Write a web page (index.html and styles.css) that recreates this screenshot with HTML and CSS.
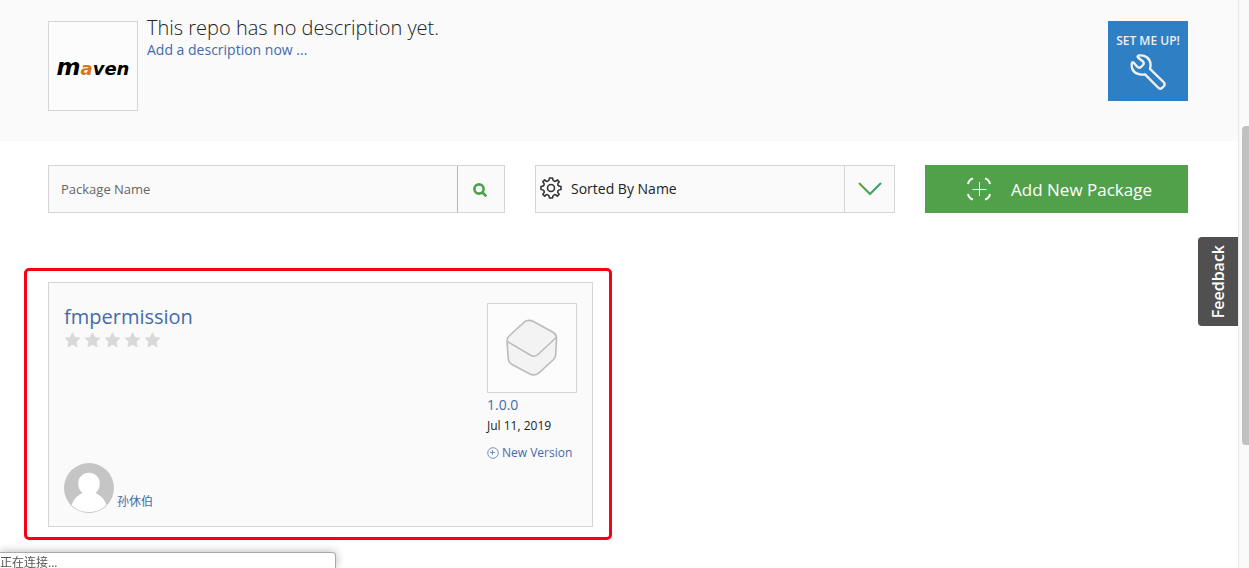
FILE: index.html
```html
<!DOCTYPE html>
<html lang="en">
<head>
<meta charset="utf-8">
<title>Maven repository</title>
<link rel="stylesheet" href="styles.css">
</head>
<body>
<div class="page">
  <main class="main">
    <header class="repo">
      <div class="repo-logo"><span class="maven"><span class="maven-m">m</span><span class="maven-a">a</span>ven</span></div>
      <div class="repo-text">
        <h1 class="repo-desc">This repo has no description yet.</h1>
        <a class="repo-add" href="#">Add a description now ...</a>
      </div>
      <button class="setup" type="button">
        <span>SET ME UP!</span>
        <svg class="setup-icon" viewBox="0 0 36 36" aria-hidden="true"><path d="M2 9 Q2.500 7.500 4 9 L7 12.500 Q9 14.500 11 13 L13 11 Q14.500 9.300 13 7.500 L8.500 4 Q6.500 2 9 1.500 C15 .5 20 4.500 20.500 10 Q20.700 12.500 20 14.800 L33.500 28 Q35.500 30 34 32 L32 34 Q30 35.500 28 33.500 L15 20.300 C9.500 21.500 4 19.500 2.200 14.500 C1.500 12 1.500 11 2 9 Z"/></svg>
      </button>
    </header>
    <section class="content">
      <form class="toolbar">
        <div class="search">
          <input class="search-input" type="text" placeholder="Package Name" aria-label="Package Name">
          <button class="search-button" type="button" aria-label="Search">
            <svg class="search-icon" viewBox="0 0 14 14" aria-hidden="true"><circle cx="6" cy="6" r="4.600"/><path d="M9.500 9.500 L13.300 13.300"/></svg>
          </button>
        </div>
        <div class="sort">
          <select class="sort-select" aria-label="Sort order"><option>Sorted By Name</option></select>
          <svg class="gear" viewBox="0 0 22 22" aria-hidden="true"><circle cx="11" cy="11" r="3.500"/><path d="M9.500 1 H12.500 Q12.800 4 14.500 4.300 Q16 4.600 17.300 2.900 L19.200 4.800 Q17.200 6.500 17.800 7.900 Q18.400 9.400 21 9.500 V12.500 Q18.400 12.700 17.800 14.100 Q17.200 15.500 19.200 17.300 L17.300 19.200 Q16 17.400 14.500 17.700 Q12.800 18 12.500 21 H9.500 Q9.200 18 7.500 17.700 Q6 17.400 4.700 19.200 L2.800 17.300 Q4.800 15.500 4.200 14.100 Q3.600 12.700 1 12.500 V9.500 Q3.600 9.400 4.200 7.900 Q4.800 6.500 2.800 4.800 L4.700 2.900 Q6 4.600 7.500 4.300 Q9.200 4 9.500 1 Z"/></svg>
          <span class="sort-arrow">
            <svg class="chevron" viewBox="0 0 24 14" aria-hidden="true"><defs><linearGradient id="cg"><stop offset="0" stop-color="#679f35"/><stop offset="1" stop-color="#27a27b"/></linearGradient></defs><path d="M1 1 L12 12 L23 1" stroke="url(#cg)"/></svg>
          </span>
        </div>
        <button class="add" type="button">
          <svg class="add-icon" viewBox="0 0 24 24" aria-hidden="true"><path class="add-corners" d="M6 1.500 Q2 2.500 1 7 M18 1.500 Q22 2.500 23 7 M1 17 Q2 21.500 6 22.500 M23 17 Q22 21.500 18 22.500"/><path d="M12.500 5 V19 M5.500 12.500 H19.500"/></svg>
          <span>Add New Package</span>
        </button>
      </form>
      <div class="packages">
        <article class="card">
          <div class="card-left">
            <a class="card-name" href="#">fmpermission</a>
            <div class="stars" role="img" aria-label="No rating">
              <svg viewBox="0 0 16 16"><path d="M8 .5 L10.300 5.300 L15.600 6 L11.800 9.700 L12.700 15 L8 12.500 L3.300 15 L4.200 9.700 L.4 6 L5.700 5.300 Z"/></svg>
              <svg viewBox="0 0 16 16"><path d="M8 .5 L10.300 5.300 L15.600 6 L11.800 9.700 L12.700 15 L8 12.500 L3.300 15 L4.200 9.700 L.4 6 L5.700 5.300 Z"/></svg>
              <svg viewBox="0 0 16 16"><path d="M8 .5 L10.300 5.300 L15.600 6 L11.800 9.700 L12.700 15 L8 12.500 L3.300 15 L4.200 9.700 L.4 6 L5.700 5.300 Z"/></svg>
              <svg viewBox="0 0 16 16"><path d="M8 .5 L10.300 5.300 L15.600 6 L11.800 9.700 L12.700 15 L8 12.500 L3.300 15 L4.200 9.700 L.4 6 L5.700 5.300 Z"/></svg>
              <svg viewBox="0 0 16 16"><path d="M8 .5 L10.300 5.300 L15.600 6 L11.800 9.700 L12.700 15 L8 12.500 L3.300 15 L4.200 9.700 L.4 6 L5.700 5.300 Z"/></svg>
            </div>
            <div class="owner">
              <svg class="avatar" viewBox="0 0 50 50" aria-hidden="true"><defs><clipPath id="av"><circle cx="25" cy="25" r="24.500"/></clipPath></defs><circle cx="25" cy="25" r="25" fill="#c5c5c5"/><g clip-path="url(#av)" fill="#fff"><path d="M14.200 20.500 A10.800 10.800 0 1 1 35.800 20.500 Q35.500 27 31.500 30 Q39 33 42.500 42 Q36 49 25 49 Q14 49 7.500 42 Q11 33 18.500 30 Q14.500 27 14.200 20.500 Z"/></g></svg>
              <a class="owner-name" href="#">孙休伯</a>
            </div>
          </div>
          <div class="card-right">
            <div class="thumb">
              <svg class="box-icon" viewBox="0 0 52 58" aria-hidden="true"><path d="M18.500 2.800 Q22.500 .2 27 2.300 L47.500 13.500 Q51 16 50.500 20 L49.700 36 Q49.500 38.500 47.500 40.500 L33 53.800 Q29 57.300 24 55 L6 45.500 Q2.500 43.500 2.300 40 L1 22 Q1 19 3.500 16.500 Z"/><path d="M1.300 22.500 L25 36.500 Q29 38.500 32.500 35 L50.200 18.500"/></svg>
            </div>
            <a class="version" href="#">1.0.0</a>
            <time class="date" datetime="2019-07-11">Jul 11, 2019</time>
            <a class="new-version" href="#"><svg viewBox="0 0 12 12" aria-hidden="true"><circle cx="6" cy="6" r="5.300"/><path d="M5.500 3 V8 M3 5.500 H8"/></svg>New Version</a>
          </div>
          <div class="highlight"></div>
        </article>
      </div>
    </section>
  </main>
  <div class="scrollbar"><div class="scroll-thumb"></div></div>
</div>
<button class="feedback" type="button">Feedback</button>
<div class="status">正在连接...</div>
</body>
</html>
```
FILE: styles.css
```css
* { box-sizing: border-box; }
body {
  margin: 0;
  background: #fff;
  color: #222;
  font-family: "Open Sans", "Noto Sans CJK SC", sans-serif;
  font-size: 14px;
  overflow: hidden;
}
button, input, select { font: inherit; color: inherit; margin: 0; border-radius: 0; }
button { cursor: pointer; }
a { color: #446ba9; text-decoration: none; }
svg { display: block; fill: none; flex: none; }
.page { display: flex; min-height: 100vh; }
.main { flex: 1; }

.repo { display: flex; gap: 9px; padding: 21px 50px 30px 48px; background: #fafafa; }
.repo-logo, .thumb {
  display: flex;
  align-items: center;
  justify-content: center;
  width: 90px;
  height: 90px;
  border: 1px solid #d5d5d5;
  background: #fcfcfc;
}
.maven { font: italic bold 18px/24px "DejaVu Sans", sans-serif; color: #000; padding-top: 3px; }
.maven-m { font-size: 23px; }
.maven-a { color: #d57a1c; }
.repo-text { flex: 1; display: flex; flex-direction: column; align-items: flex-start; }
.repo-desc { margin: -5px 0 0; font-size: 20px; line-height: 24px; font-weight: 300; }
.repo-add { line-height: 20px; }
.setup {
  display: flex;
  flex-direction: column;
  align-items: center;
  gap: 4px;
  width: 80px;
  height: 80px;
  padding: 11px 0 0;
  border: 0;
  background: #2f7fc5;
  color: #eee;
  font-size: 12px;
  line-height: 18px;
  font-weight: 600;
}
.setup-icon { width: 36px; height: 36px; stroke: #f0f0f0; stroke-width: 2.4; stroke-linejoin: round; }

.content { padding: 24px 50px 0 48px; }
.toolbar { display: grid; grid-template-columns: 457fr 360fr 263fr; gap: 30px; }
.search, .sort { display: flex; height: 48px; border: 1px solid #d5d5d5; background: #fafafa; }
.search-input { flex: 1; min-width: 0; border: 0; padding: 0 12px; background: none; font-size: 13px; }
.search-input::placeholder { color: #666; opacity: 1; }
.search-button {
  display: flex;
  align-items: center;
  justify-content: center;
  width: 47px;
  padding: 2px 2px 0 0;
  border: 0;
  border-left: 1px solid #b5b5b5;
  background: none;
}
.search-icon { width: 14px; height: 14px; stroke: #4ea148; stroke-width: 2.6; }
.sort { position: relative; }
.sort-select { flex: 1; appearance: none; border: 0; padding: 0 60px 2px 35px; background: none; }
.gear { position: absolute; left: 4px; top: 11px; width: 22px; height: 22px; stroke: #333; stroke-width: 1.6; stroke-linejoin: round; pointer-events: none; }
.sort-arrow {
  position: absolute;
  inset: 0 0 0 auto;
  display: flex;
  align-items: center;
  justify-content: center;
  width: 50px;
  border-left: 1px solid #d5d5d5;
  pointer-events: none;
}
.chevron { width: 24px; height: 14px; stroke-width: 2; }
.add {
  display: flex;
  align-items: center;
  justify-content: center;
  gap: 20px;
  height: 48px;
  padding: 0 0 0 6px;
  border: 0;
  background: #51a14b;
  color: #fff;
  font-size: 17px;
}
.add-icon { width: 24px; height: 24px; stroke: #fff; stroke-width: 1; }
.add-corners { stroke-width: 2; }

.packages { display: grid; grid-template-columns: 1fr 1fr; gap: 50px; padding-top: 69px; }
.card {
  position: relative;
  display: flex;
  justify-content: space-between;
  min-height: 245px;
  padding: 20px 15px 13px;
  border: 1px solid #d5d5d5;
  background: #fafafa;
}
.card-left, .card-right { display: flex; flex-direction: column; align-items: flex-start; }
.card-name { font-size: 20px; line-height: 27px; }
.stars { display: flex; gap: 3px; padding-top: 2px; }
.stars svg { width: 17px; height: 16px; fill: #d9d9d9; stroke: #d9d9d9; stroke-width: 0.6; }
.owner { display: flex; align-items: flex-end; gap: 3px; margin-top: auto; }
.avatar { width: 50px; height: 50px; }
.owner-name { font-size: 12px; line-height: 22px; }
.card-right { width: 90px; }
.box-icon { width: 52px; height: 58px; fill: #f3f3f3; stroke: #bbb; stroke-width: 1.6; }
.version { line-height: 24px; }
.date { font-size: 12px; line-height: 18px; }
.new-version { display: flex; align-items: center; gap: 3px; padding-top: 9px; font-size: 12px; line-height: 18px; }
.new-version svg { width: 12px; height: 12px; stroke: #446ba9; stroke-width: 0.7; }
.highlight {
  position: absolute;
  inset: -15px -20px -14px -25px;
  border: 3px solid #fa0018;
  border-radius: 5px;
  pointer-events: none;
}

.scrollbar { width: 11px; border-left: 1px solid #e7e7e7; background: #fafafa; padding: 126px 0 0 3px; }
.scroll-thumb { height: 319px; border-radius: 4px 0 0 4px; background: #c1c1c1; }
.feedback {
  position: fixed;
  right: 11px;
  top: 237px;
  width: 40px;
  padding: 8px 0;
  border: 0;
  border-radius: 4px 0 0 4px;
  background: #505050;
  color: #fff;
  font-size: 16px;
  line-height: 38px;
  font-weight: 600;
  writing-mode: sideways-lr;
}
.status {
  position: fixed;
  left: 0;
  bottom: 0;
  width: 336px;
  height: 16px;
  border: solid #aaa;
  border-width: 1px 1px 0 0;
  border-radius: 0 4px 0 0;
  background: #fff;
  box-shadow: 0 0 10px rgba(0, 0, 0, .3);
  color: #555;
  font-size: 12px;
  line-height: 20px;
}
```
